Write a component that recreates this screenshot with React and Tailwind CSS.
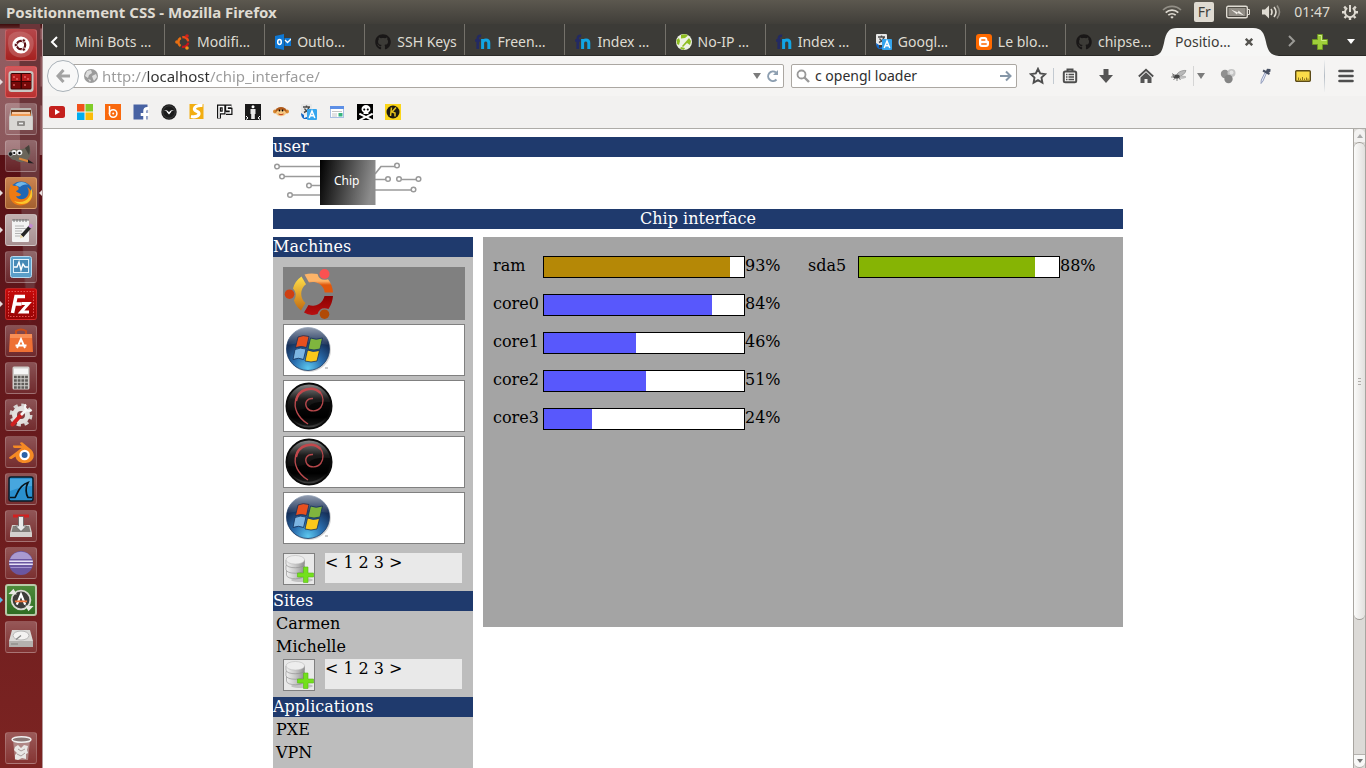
import React from "react";
import { FaGithub, FaSkullCrossbones, FaFacebookF } from "react-icons/fa";
import { SiBlender } from "react-icons/si";

/* ---------- shared drawings ---------- */

function TranslateIcon() {
  return (
    <svg viewBox="0 0 16 16" className="size-4 shrink-0" aria-hidden="true">
      <rect x="0" y="0" width="11" height="11" rx="1" fill="#e8e8e8" />
      <path d="M2 3h7M5.500 1.500V3M3 8.500c3-1.500 4.500-3 5-5.500M3.500 4.500c1 2 2.500 3 4 4" stroke="#4a4a4a" strokeWidth="1.400" fill="none" />
      <path d="M0 9l3 2v3l3-1 1 2H3C1 14 0 12 0 9z" fill="#1468c7" />
      <rect x="6" y="5" width="10" height="11" rx="1" fill="#35a5ee" />
      <path d="M8.200 14L11 7l2.800 7M9.200 11.700h3.600" stroke="#fff" strokeWidth="1.500" fill="none" />
    </svg>
  );
}

function UbuntuRing() {
  return (
    <svg viewBox="0 0 16 16" className="size-4 shrink-0" fill="none" strokeWidth="2.400" aria-hidden="true">
      <path d="M5.800 3.900A4.700 4.700 0 0 0 5.600 12" stroke="#e96f12" />
      <path d="M7.300 3.300A4.700 4.700 0 0 1 13.200 7.300" stroke="#ee4a16" />
      <path d="M13.200 8.700A4.700 4.700 0 0 1 7.100 12.600" stroke="#c8141c" />
      <circle cx="1.900" cy="8" r="1.800" fill="#e96f12" stroke="none" />
      <circle cx="12" cy="2" r="1.800" fill="#d3201c" stroke="none" />
      <circle cx="12" cy="14" r="1.800" fill="#f09018" stroke="none" />
    </svg>
  );
}

function OutlookIcon() {
  return (
    <svg viewBox="0 0 16 16" className="size-4 shrink-0" aria-hidden="true">
      <path d="M0 2l9-2v16l-9-2z" fill="#0f78d4" />
      <path d="M9.500 4H16v8H9.500z" fill="#0f78d4" />
      <path d="M10 6l2.500 2.500L16 5" stroke="#fff" strokeWidth="1.300" fill="none" />
      <ellipse cx="4.500" cy="8" rx="1.800" ry="2.400" fill="none" stroke="#fff" strokeWidth="1.500" />
    </svg>
  );
}

function FnIcon() {
  return (
    <svg viewBox="0 0 16 16" className="size-4 shrink-0" aria-hidden="true">
      <path d="M2.700 15V5c0-2.500 1-3.500 3.500-3.200M0 6.500h5.500" stroke="#232a63" strokeWidth="2.600" fill="none" />
      <path d="M7.600 15V5M7.600 8.500C8.500 5.300 13.800 5 13.800 9v6" stroke="#12a5e4" strokeWidth="3" fill="none" />
    </svg>
  );
}

function NoIpIcon() {
  return (
    <svg viewBox="0 0 16 16" className="size-4 shrink-0" aria-hidden="true">
      <circle cx="8" cy="8" r="8" fill="#eef2e4" />
      <path d="M5 1q4-1.500 7 .5L9 4 5 4.500zM.5 6l2.500-2 1 3-1 4-2-1zM6 12l7-8 2 3-1 4-3-2-4 4zM5 13l4 1-1 2-4-1.500z" fill="#8fbe22" />
    </svg>
  );
}

function BloggerIcon() {
  return (
    <svg viewBox="0 0 16 16" className="size-4 shrink-0" aria-hidden="true">
      <rect width="16" height="16" rx="3" fill="#ff6a00" />
      <path d="M5.500 3h3.200C10.500 3 11.300 4 11.300 5.500c0 1 .4 1.300 1.200 1.500.5.200.5.500.5 1V10c0 2-1.200 3-3 3H6c-2 0-3-1.200-3-3V6c0-2 1-3 2.500-3z" fill="#fff" />
      <path d="M5.800 6h3M5.800 10h4.400" stroke="#ff6a00" strokeWidth="1.500" strokeLinecap="round" />
    </svg>
  );
}

const TABS = [
  { label: "Mini Bots …" },
  { label: "Modifi…", icon: <UbuntuRing /> },
  { label: "Outlo…", icon: <OutlookIcon /> },
  { label: "SSH Keys", icon: <FaGithub className="size-4 shrink-0 text-[#191717]" /> },
  { label: "Freen…", icon: <FnIcon /> },
  { label: "Index …", icon: <FnIcon /> },
  { label: "No-IP …", icon: <NoIpIcon /> },
  { label: "Index …", icon: <FnIcon /> },
  { label: "Googl…", icon: <TranslateIcon /> },
  { label: "Le blo…", icon: <BloggerIcon /> },
  { label: "chipse…", icon: <FaGithub className="size-4 shrink-0 text-[#191717]" /> },
];

/* ---------- title bar ---------- */

function TitleBar() {
  return (
    <header className="flex h-6 shrink-0 items-center bg-linear-to-b from-[#5c584f] to-[#403e39] pr-2 pl-1.5 text-[#dfdbd2]">
      <h1 className="text-[15px] leading-6 font-bold">Positionnement CSS - Mozilla Firefox</h1>
      <div className="ml-auto flex items-center gap-3">
        <svg viewBox="0 0 20 14" className="h-3.5 w-5" aria-label="Wi-Fi" fill="none" stroke="#dfdbd2" strokeWidth="1.700">
          <path d="M1 5a13 13 0 0 1 18 0" opacity=".45" />
          <path d="M3.700 7.600a9.500 9.500 0 0 1 12.600 0" />
          <path d="M6.300 10.200a5.500 5.500 0 0 1 7.400 0" />
          <path d="M8.300 12l1.700 1.800 1.700-1.800a2.500 2.500 0 0 0-3.400 0z" fill="#dfdbd2" stroke="none" />
        </svg>
        <span className="flex h-5 w-5 items-center justify-center rounded-xs bg-[#dfdbd2] text-sm text-[#3f3e3a]">Fr</span>
        <svg viewBox="0 0 24 14" className="h-3.5 w-6" aria-label="Battery">
          <rect x=".7" y="1.200" width="20.600" height="11.600" rx="1.500" fill="none" stroke="#dfdbd2" strokeWidth="1.400" />
          <rect x="2.500" y="3" width="17" height="8" fill="#918d85" />
          <path d="M22 4.500h1.500v5H22" fill="none" stroke="#dfdbd2" />
          <path d="M5 4.500l7 3 .5-2 5.500 5-6.500-2.500-.5 1.500z" fill="#f1eee8" />
        </svg>
        <svg viewBox="0 0 20 16" className="h-4 w-5" aria-label="Sound" fill="none" stroke="#dfdbd2" strokeWidth="1.600">
          <path d="M0 5.500h3l4-4v13l-4-4H0z" fill="#dfdbd2" stroke="none" />
          <path d="M9 5q2 3 0 6M12 3q4 5 0 10" />
          <path d="M15 1.500q5 6.500 0 13" opacity=".45" />
        </svg>
        <time className="text-sm">01:47</time>
        <svg viewBox="0 0 16 16" className="size-4" aria-label="Session" fill="none" stroke="#dfdbd2">
          <path d="M5.200 4A5 5 0 1 0 10.800 4" strokeWidth="2" />
          <path d="M8 1v7" strokeWidth="2" />
          <path d="M3.800 4.300L2.200 2.700M12.200 4.300l1.600-1.600M3 8.300H0M16 8.300h-3M4.200 12.200L2.500 14M11.800 12.200l1.700 1.800M8 13v3" strokeWidth="2.400" />
        </svg>
      </div>
    </header>
  );
}

/* ---------- launcher ---------- */

const GLASS = "border-[#ffffff2e] bg-linear-to-b from-[#ffffff40] to-[#ffffff14]";

const APPS = [
  {
    name: "Dash",
    tile: "border-[#ffffff2e] bg-linear-to-b from-[#b5464a] to-[#a5201f]",
    art: (
      <>
        <path d="M3 6C8 0 20 0 26 7c3 5 2 13-3 18C15 30 6 27 3 20q-2-8 0-14z" fill="#d28a8a" opacity=".4" />
        <circle cx="15" cy="15" r="8.600" fill="#fff" />
        <circle cx="15" cy="15" r="4.200" fill="none" stroke="#5d1117" strokeWidth="2.200" />
        <circle cx="9.800" cy="15" r="1.700" fill="#5d1117" stroke="#fff" strokeWidth=".8" />
        <circle cx="17.800" cy="10.500" r="1.700" fill="#5d1117" stroke="#fff" strokeWidth=".8" />
        <circle cx="17.800" cy="19.500" r="1.700" fill="#5d1117" stroke="#fff" strokeWidth=".8" />
      </>
    ),
  },
  {
    name: "Terminal",
    running: true,
    tile: "border-[#ff8a8a60] bg-linear-to-b from-[#d2585c] to-[#b8302f]",
    art: (
      <>
        <rect x="2.500" y="4" width="25" height="21" rx="3" fill="#c9c5c0" />
        <rect x="4.500" y="6" width="21" height="16.500" rx="1.500" fill="#3a0303" />
        <path d="M5.500 7h9v7h-9zM16 7h9v7h-9z" fill="#b51a1a" />
        <path d="M5.500 15h9v6.500h-9zM16 15h9v6.500h-9z" fill="#760808" />
        <path d="M7 10h2M10 12h2M18 10h2M21 12h2M7 18h2M18 18h2" stroke="#ff8080" />
      </>
    ),
  },
  {
    name: "Files",
    tile: GLASS,
    art: (
      <>
        <path d="M5 4h20l2 9v13H3V13z" fill="#b9b6b2" />
        <rect x="5" y="6" width="20" height="7" fill="#6b3b1d" />
        <path d="M6 8h18l1 4H5z" fill="#ef9a52" />
        <path d="M6 9h18" stroke="#fff" strokeWidth="1.200" />
        <rect x="3.500" y="12" width="23" height="14" rx="1" fill="#d9d7d4" />
        <rect x="11" y="17" width="8" height="5" rx="1" fill="#8e8b88" />
        <path d="M13 19.500h4" stroke="#eee" strokeWidth="1.500" />
      </>
    ),
  },
  {
    name: "GIMP",
    tile: GLASS,
    art: (
      <>
        <path d="M3 13c1-5 4-5 6-5 5 1 9 1 14-4 2 6 2 11-1 14-4 4-9 4-13 1-3 0-6-2-6-6z" fill="#6a655a" />
        <path d="M19 7l4-3c1 4 1 7 0 10z" fill="#45413a" />
        <circle cx="8" cy="11.500" r="2.600" fill="#eee" />
        <circle cx="13.500" cy="11.500" r="2.800" fill="#eee" />
        <circle cx="8.200" cy="12" r="1.100" />
        <circle cx="13.500" cy="12" r="1.200" />
        <circle cx="4.500" cy="13" r="2.300" fill="#1b1b1b" stroke="#aaa" strokeWidth=".8" />
        <path d="M13 17.500l10 3" stroke="#d8883c" strokeWidth="2.200" />
        <path d="M22 18.500l6 4-6-.5z" fill="#222" />
      </>
    ),
  },
  {
    name: "Firefox",
    running: true,
    focused: true,
    tile: "border-[#ffd3a060] bg-linear-to-b from-[#c98350] to-[#a4602f]",
    art: (
      <>
        <circle cx="15" cy="15" r="11.500" fill="#2167b5" />
        <path d="M9 7c3-4 10-4 13 0-3-1-6 0-8 2z" fill="#71b7e8" />
        <path d="M5 6c2 2 4 2 6 2 2 1 2 3 1 4l-2 1c1 2 5 2 5 4-2 2-4 1-5 1 2 5 10 4 12-1 1-3 1-5-1-8 6 3 7 12 1 16-6 4-14 3-17-3-3-5-2-11 0-16z" fill="#ee7a12" />
        <path d="M25 10c3 6 1 12-4 15-5 2-10 1-13-2 6 2 12 1 15-4 2-3 2-6 2-9z" fill="#fbc72b" />
      </>
    ),
  },
  {
    name: "Text Editor",
    running: true,
    tile: "border-[#ffffff50] bg-linear-to-b from-[#c2b0b0] to-[#a78f90]",
    art: (
      <>
        <rect x="6" y="5" width="17" height="22" rx="1" fill="#f3f3f3" />
        <path d="M6 5h17M8 4v3M11 4v3M14 4v3M17 4v3M20 4v3" stroke="#777" />
        <path d="M9 11h9M9 13.500h11M9 16h7M9 18.500h9M9 21h6" stroke="#b4b4b4" />
        <path d="M16 21l8-9" stroke="#252525" strokeWidth="3.400" />
        <path d="M23.500 12.500l2.500-3" stroke="#c28ad0" strokeWidth="3.400" />
        <path d="M14 23.500l.7-3.800 2.700 2.200z" fill="#ead8a4" />
      </>
    ),
  },
  {
    name: "System Monitor",
    tile: GLASS,
    art: (
      <>
        <rect x="4.500" y="4.500" width="21" height="21" rx="2" fill="#5b9fc9" stroke="#b5d9ee" />
        <rect x="7.500" y="7.500" width="15" height="13" fill="#468ab6" stroke="#dff0fa" />
        <path d="M8 15h3l2-5 2 8 2-6 2 3h3" fill="none" stroke="#fff" strokeWidth="1.400" />
      </>
    ),
  },
  {
    name: "FileZilla",
    running: true,
    tile: "border-[#ff6b6b50] bg-linear-to-b from-[#c80b0b] to-[#970505]",
    art: (
      <>
        <rect x="2.500" y="2.500" width="25" height="25" fill="none" stroke="#e45555" strokeDasharray="1.500 1.500" />
        <path d="M6.500 24L10 7.500h9M8.500 15h7" fill="none" stroke="#fff" strokeWidth="3.600" />
        <path d="M15.500 14.500h7L15 23h8" fill="none" stroke="#fff" strokeWidth="3" />
      </>
    ),
  },
  {
    name: "Software Center",
    tile: GLASS,
    art: (
      <>
        <path d="M10 9V5q5-3 10 0v4" fill="none" stroke="#c94c17" strokeWidth="2" />
        <path d="M4 8h22l1 18H3z" fill="#ee7034" />
        <path d="M4 8h22v4H4z" fill="#f78e55" />
        <path d="M11 22l4-9 4 9M9.500 19.500h11" fill="none" stroke="#fff" strokeWidth="1.900" />
      </>
    ),
  },
  {
    name: "Calculator",
    tile: GLASS,
    art: (
      <>
        <rect x="6.500" y="3.500" width="17" height="23" rx="1.500" fill="#cfcdca" />
        <rect x="8" y="5.500" width="14" height="5.500" fill="#f6f6f6" />
        <path d="M8 14h14M8 17.500h14M8 21h14M8 24.500h14" stroke="#5f5c59" strokeWidth="2.600" strokeDasharray="2.800 .9" />
      </>
    ),
  },
  {
    name: "System Settings",
    tile: GLASS,
    art: (
      <>
        <circle cx="15" cy="15" r="9.500" fill="none" stroke="#d6d3d1" strokeWidth="4" strokeDasharray="4 3.460" />
        <circle cx="15" cy="15" r="6.500" fill="none" stroke="#e3e0de" strokeWidth="5" />
        <path d="M6.500 24.500L15 15" stroke="#cf2020" strokeWidth="4" strokeLinecap="round" />
        <path d="M15 15l5-5" stroke="#f6f6f6" strokeWidth="2.600" />
        <path d="M20 4.500a3.600 3.600 0 1 0 5.500 5" fill="none" stroke="#f6f6f6" strokeWidth="2.200" />
      </>
    ),
  },
  {
    name: "Blender",
    tile: GLASS,
    art: (
      <>
        <path d="M3 20.500L15.500 11H8.500q-2-.5-1.500-2.500h9L14 6.500q.5-2 2.500-1L25.500 13q3 3.500 2 7.500c-2 5-7 6-11 5.500-4-.8-6.500-3.500-7-6.500L5.500 22q-2.500 0-2.500-1.500z" fill="#f58a24" />
        <circle cx="18.600" cy="18" r="5.200" fill="#fff" />
        <circle cx="18.600" cy="18" r="3" fill="#2a62a8" />
      </>
    ),
  },
  {
    name: "Wireshark",
    tile: GLASS,
    art: (
      <>
        <rect x="3" y="3" width="24" height="24" rx="2" fill="#2a90cf" stroke="#0a1a26" strokeWidth="1.500" />
        <path d="M4 5h22v7c-8 0-14 2-22 5z" fill="#5bb6e8" opacity=".6" />
        <path d="M4 23.500h5c2-2 3-12 13-15-3 5-2 12 0 15h4" fill="none" stroke="#07131c" strokeWidth="1.700" />
      </>
    ),
  },
  {
    name: "Installer",
    tile: GLASS,
    art: (
      <>
        <path d="M6 14h18l2 8v4H4v-4z" fill="#d3d0cd" />
        <path d="M7 15h16l1.500 6h-19z" fill="#817d79" />
        <path d="M7 5h16" stroke="#d22020" strokeWidth="3" />
        <path d="M12.500 5.500h5V15h3L15 20.500 9.500 15h3z" fill="#e9e9e9" stroke="#555" strokeWidth=".7" />
      </>
    ),
  },
  {
    name: "Eclipse",
    tile: GLASS,
    art: (
      <>
        <circle cx="15" cy="15" r="12" fill="#6a56a0" />
        <path d="M4 11a12 12 0 0 1 22 0z" fill="#a99ad0" />
        <path d="M3.200 13.300h23.600M3.200 16.300h23.600" stroke="#e7e1f5" strokeWidth="1.600" />
        <path d="M4.500 19.500h21" stroke="#a392cf" strokeWidth="1.200" />
      </>
    ),
  },
  {
    name: "Software Updater",
    urgent: true,
    tile: "border-2 border-[#b8c9a8] bg-linear-to-b from-[#4d8a3a] to-[#2f6d23]",
    art: (
      <>
        <circle cx="15" cy="15" r="10" fill="#3d3d3a" stroke="#d9d9d2" strokeWidth="2" />
        <path d="M1.500 8.500L7 3l3.500 6zM28.500 21.500L23 27l-3.500-6z" fill="#e9e9e4" />
        <path d="M10.500 20l4.500-11 4.500 11" fill="none" stroke="#fff" strokeWidth="2.400" />
        <path d="M8.500 16.500h13" stroke="#f0763c" strokeWidth="2" />
      </>
    ),
  },
  {
    name: "Disk",
    tile: GLASS,
    art: (
      <>
        <path d="M6 8h18l3 11v6H3v-6z" fill="#dbd9d7" />
        <path d="M3 19h24v6H3z" fill="#b4b1ae" />
        <ellipse cx="15" cy="13.500" rx="8" ry="4.500" fill="#f3f2f1" stroke="#aaa" strokeWidth=".8" />
        <path d="M15 13.500l-5 4" stroke="#888" strokeWidth="1.300" />
        <path d="M5 22h7" stroke="#83807d" />
      </>
    ),
  },
];

const TRASH = {
  name: "Trash",
  tile: GLASS,
  art: (
    <>
      <path d="M7 7h17l-2 20H9z" fill="#c9b9b8" opacity=".55" />
      <ellipse cx="15.500" cy="6.500" rx="9.500" ry="2.800" fill="#8b7876" stroke="#efefef" strokeWidth="1.400" />
      <path d="M9 14l3-2 3 3 3-3 4 1-1 4 1 3-2 1v5l-4-1-4 2-3-1v-4l2-2-3-3z" fill="#e9e7e5" />
      <path d="M12 16l3 2 4-2M11 21l4 2 4-3" stroke="#a99c9b" fill="none" />
    </>
  ),
};

function LauncherItem({ app }) {
  return (
    <li className="flex w-full items-center">
      <svg viewBox="0 0 3 6" className="mr-0.5 h-1.5 w-[3px] shrink-0" aria-hidden="true">
        {app.running && <path d="M0 0l3 3-3 3z" fill="#e8dede" />}
        {app.urgent && <path d="M0 0l3 3-3 3z" fill="#5db9e8" />}
      </svg>
      <button aria-label={app.name} className={`size-8 shrink-0 overflow-hidden rounded-[3px] border ${app.tile}`}>
        <svg viewBox="0 0 30 30" className="size-full" aria-hidden="true">
          {app.art}
        </svg>
      </button>
      {app.focused && (
        <svg viewBox="0 0 3 6" className="ml-auto h-1.5 w-[3px]" aria-hidden="true">
          <path d="M3 0L0 3l3 3z" fill="#e8dede" />
        </svg>
      )}
    </li>
  );
}

function Launcher() {
  return (
    <nav
      aria-label="Launcher"
      className="flex w-[43px] shrink-0 flex-col border-r border-[#b59a9b] bg-[radial-gradient(circle_at_42px_24px,#6b3539_8px,transparent_9px),radial-gradient(circle_at_42px_72px,#6b3539_9px,transparent_10px),radial-gradient(ellipse_at_30px_44px,#6b3539_10px,transparent_11px),linear-gradient(to_bottom,#3d0c0c_0px,#5d2425_4px,#925d61_5px,#8c595d_131px,#54101500_131px),linear-gradient(to_bottom,#54080c,#5c151a_30%,#7c2422)] pt-[5px] pb-1"
    >
      <ul className="flex flex-col gap-[5px]">
        {APPS.map((app) => (
          <LauncherItem key={app.name} app={app} />
        ))}
      </ul>
      <ul className="mt-auto">
        <LauncherItem app={TRASH} />
      </ul>
    </nav>
  );
}

/* ---------- tab strip ---------- */

function TabStrip() {
  return (
    <div className="flex h-8 shrink-0 items-stretch border-b border-[#2b2a27] bg-[#3c3b37]" role="tablist">
      <button aria-label="Scroll tabs left" className="flex w-[21px] shrink-0 items-center justify-center pt-1">
        <svg viewBox="0 0 8 12" className="h-3 w-2" fill="none" stroke="#fff" strokeWidth="2">
          <path d="M7 1L2 6l5 5" />
        </svg>
      </button>
      {TABS.map((tab, i) => (
        <button
          key={i}
          role="tab"
          aria-selected="false"
          className="flex min-w-0 flex-1 items-center gap-1.5 overflow-hidden border-l border-[#74716a] pt-1 pl-2.5 text-sm whitespace-nowrap text-[#dfdbd2]"
        >
          {tab.icon}
          <span>{tab.label}</span>
        </button>
      ))}
      <div role="tab" aria-selected="true" className="relative -mb-px -ml-3 flex w-[126px] shrink-0 items-center pt-1 pl-[22px] text-sm whitespace-nowrap text-[#3c3b37]">
        <svg viewBox="0 0 126 32" preserveAspectRatio="none" className="absolute inset-0 size-full" aria-hidden="true">
          <path d="M0 32C8 31 9 27 11 19 13 8 16 4 24 4H100c9 0 11 5 13 14 2 9 4 13 13 14z" fill="#f6f6f5" />
        </svg>
        <span className="relative">Positio…</span>
        <button aria-label="Close tab" className="relative ml-3.5">
          <svg viewBox="0 0 8 8" className="size-2" stroke="#555450" strokeWidth="2.400">
            <path d="M.8.8l6.400 6.400M7.200.8L.8 7.200" />
          </svg>
        </button>
      </div>
      <button aria-label="Scroll tabs right" className="flex w-[25px] shrink-0 items-center justify-center pt-0.5">
        <svg viewBox="0 0 8 12" className="h-3 w-2" fill="none" stroke="#9b9a96" strokeWidth="2">
          <path d="M1 1l5 5-5 5" />
        </svg>
      </button>
      <button aria-label="New tab" className="flex w-8 shrink-0 items-center justify-center pt-1">
        <svg viewBox="0 0 16 16" className="size-4">
          <path d="M5.500.5h5v5h5v5h-5v5h-5v-5h-5v-5h5z" fill="#9fce3a" stroke="#6f9722" />
          <path d="M6.500 1.500h3v5h5" stroke="#cfeb86" fill="none" />
        </svg>
      </button>
      <button aria-label="List all tabs" className="flex w-[30px] shrink-0 items-center justify-center pt-1">
        <svg viewBox="0 0 8 5" className="h-[5px] w-2">
          <path d="M0 0h8L4 5z" fill="#fff" />
        </svg>
      </button>
    </div>
  );
}

/* ---------- navigation toolbar ---------- */

function ToolButton({ label, width, children }) {
  return (
    <button aria-label={label} className={`flex h-8 shrink-0 items-center justify-center ${width}`}>
      {children}
    </button>
  );
}

function NavBar() {
  return (
    <div className="flex h-10 shrink-0 items-center bg-[#f5f4f3]">
      <button
        aria-label="Back"
        className="z-10 ml-1 flex size-8 shrink-0 items-center justify-center rounded-full border border-[#a9b1b8] bg-[#f8f8f8]"
      >
        <svg viewBox="0 0 14 14" className="size-3.5" fill="none" stroke="#a3a3a3" strokeWidth="3">
          <path d="M7.500 1L2 7l5.500 6M2.500 7H14" />
        </svg>
      </button>
      <div className="-ml-4 flex h-6 min-w-0 flex-1 items-center rounded-xs border border-[#aba7a2] bg-white pr-1 pl-5">
        <svg viewBox="0 0 14 14" className="size-3.5 shrink-0" aria-hidden="true">
          <circle cx="7" cy="7" r="7" fill="#9b9b9b" />
          <path d="M3 2l4-1 1 3-3 2-1 3-3-2zM8 7l4-2 1 3-3 4-1-2zM4 10l3 1-1 2z" fill="#dedede" />
        </svg>
        <input
          aria-label="Address"
          type="text"
          defaultValue="http://localhost/chip_interface/"
          className="ml-1 min-w-0 flex-1 bg-[linear-gradient(to_right,#9a9a9a_44px,#2e2e2e_44px,#2e2e2e_107px,#9a9a9a_107px)] bg-clip-text text-[15px] text-transparent outline-none"
        />
        <svg viewBox="0 0 8 6" className="h-1.5 w-2" aria-hidden="true">
          <path d="M0 0h8L4 6z" fill="#7b7b7b" />
        </svg>
        <button aria-label="Reload" className="ml-1.5">
          <svg viewBox="0 0 12 12" className="size-3" fill="none" stroke="#8d9fb1" strokeWidth="2">
            <path d="M9.500 9.500A4.800 4.800 0 1 1 9 2.500" />
            <path d="M11 0v5H6z" fill="#8d9fb1" stroke="none" />
          </svg>
        </button>
      </div>
      <div className="ml-[7px] flex h-6 w-[226px] shrink-0 items-center rounded-xs border border-[#aba7a2] bg-white px-1">
        <svg viewBox="0 0 14 14" className="size-3.5 shrink-0" fill="none" stroke="#999" aria-hidden="true">
          <circle cx="5.500" cy="5.500" r="4" strokeWidth="1.800" />
          <path d="M8.500 8.500L13 13" strokeWidth="2.400" />
        </svg>
        <input
          aria-label="Search"
          type="text"
          defaultValue="c opengl loader"
          className="ml-[5px] min-w-0 flex-1 text-sm text-[#2e2e2e] outline-none"
        />
        <button aria-label="Go">
          <svg viewBox="0 0 12 12" className="size-3" fill="none" stroke="#8697a8" strokeWidth="2">
            <path d="M0 6h10M6 1.500L10.500 6 6 10.500" />
          </svg>
        </button>
      </div>
      <ToolButton label="Bookmark this page" width="ml-[5px] w-[31px]">
        <svg viewBox="0 0 18 18" className="size-[18px]">
          <path d="M9 1.800l2.200 4.600 5 .7-3.700 3.500.9 5L9 13.200l-4.400 2.400.9-5L1.800 7.100l5-.7z" fill="none" stroke="#4e4e4e" strokeWidth="1.900" />
        </svg>
      </ToolButton>
      <span className="h-4 w-px shrink-0 bg-[#c3cad1]" />
      <ToolButton label="Bookmarks" width="w-[31px]">
        <svg viewBox="0 0 16 16" className="size-4" fill="none" stroke="#4e4e4e">
          <rect x="1.800" y="3.500" width="12.400" height="10.700" rx="1.500" strokeWidth="2" />
          <path d="M5.500 3V1.500h5V3" strokeWidth="2" />
          <path d="M4 6.500h1.500M6.500 6.500H12M4 9h1.500M6.500 9H12M4 11.500h1.500M6.500 11.500H12" strokeWidth="1.400" />
        </svg>
      </ToolButton>
      <ToolButton label="Downloads" width="w-[42px]">
        <svg viewBox="0 0 14 14" className="size-3.5">
          <path d="M4.500 0h5v6H14l-7 8-7-8h4.500z" fill="#555" />
        </svg>
      </ToolButton>
      <ToolButton label="Home" width="w-[38px]">
        <svg viewBox="0 0 16 16" className="size-4" fill="none" stroke="#4e4e4e">
          <path d="M.8 8.500L8 1.800l7.200 6.700" strokeWidth="1.800" />
          <path d="M2.500 9.500L8 4.300l5.500 5.200V15h-4v-4h-3v4h-4z" fill="#555" stroke="none" />
        </svg>
      </ToolButton>
      <ToolButton label="Firebug" width="w-7">
        <svg viewBox="0 0 16 16" className="size-4">
          <path d="M6 6c2-3 7-4 9-3.500C14 6 11 8 7 8.500z" fill="#b9b9b9" stroke="#888" strokeWidth=".7" />
          <path d="M8 9c3-1 6-1 7 0-2 1.500-5 1.500-7 1z" fill="#c9c9c9" stroke="#999" strokeWidth=".6" />
          <ellipse cx="5.500" cy="8.500" rx="3.200" ry="2" fill="#454545" />
          <circle cx="2.700" cy="7.500" r="1.300" fill="#888" />
          <path d="M1 5.500l2 1.500M0 9h3M2.500 12l2-2.500M6 13v-3M9.500 12L8 10" stroke="#555" strokeWidth=".7" />
        </svg>
      </ToolButton>
      <span className="h-5 w-px shrink-0 bg-[#d5d5d5]" />
      <ToolButton label="Firebug menu" width="w-[13px]">
        <svg viewBox="0 0 8 6" className="h-1.5 w-2">
          <path d="M0 0h8L4 6z" fill="#7b7b7b" />
        </svg>
      </ToolButton>
      <ToolButton label="Colors" width="w-[42px]">
        <svg viewBox="0 0 16 16" className="size-4">
          <circle cx="5" cy="6" r="4.200" fill="#909090" />
          <circle cx="11.500" cy="5" r="4" fill="#c4c4c4" />
          <circle cx="8.500" cy="11" r="4.200" fill="#848484" />
          <circle cx="11.500" cy="4.500" r="2" fill="#e4e4e4" />
        </svg>
      </ToolButton>
      <ToolButton label="Color picker" width="w-8">
        <svg viewBox="0 0 16 16" className="size-4">
          <path d="M9.500 5L6 13l-2 2.500L4.300 12 8 4.500z" fill="#e8ecf8" stroke="#8b96b8" strokeWidth=".9" />
          <path d="M6 2.500l6.500 3.500" stroke="#4a5264" strokeWidth="2.200" />
          <path d="M8.500 4L10 .8l3.500.2v2.500L11 5z" fill="#4a5264" />
        </svg>
      </ToolButton>
      <ToolButton label="Ruler" width="w-[43px]">
        <svg viewBox="0 0 16 12" className="h-3 w-4">
          <rect x=".7" y=".7" width="14.600" height="10.600" rx="1" fill="#fbdc49" stroke="#5b4a17" strokeWidth="1.400" />
          <path d="M3.500 10V7.500M5.500 10V8.500M7.500 10V7M9.500 10V8.500M11.500 10V7.500M13 10V8.500" stroke="#8e7520" />
        </svg>
      </ToolButton>
      <span className="h-8 w-px shrink-0 bg-linear-to-b from-[#f1f1f1] via-[#b4bcc4] to-[#f1f1f1]" />
      <ToolButton label="Menu" width="w-[41px]">
        <svg viewBox="0 0 16 14" className="h-3.5 w-4" stroke="#4e4e4e" strokeWidth="2.600" strokeLinecap="round">
          <path d="M1.500 2h13M1.500 7h13M1.500 12h13" />
        </svg>
      </ToolButton>
    </div>
  );
}

/* ---------- bookmarks ---------- */

const BOOKMARKS = [
  ["YouTube", <><rect y="2" width="16" height="12" rx="2.500" fill="#c4201d" /><path d="M6 5l5 3-5 3z" fill="#fff" /></>],
  ["Microsoft", <><path d="M0 0h7.500v7.500H0z" fill="#f1511b" /><path d="M8.500 0H16v7.500H8.500z" fill="#80cc28" /><path d="M0 8.500h7.500V16H0z" fill="#00adef" /><path d="M8.500 8.500H16V16H8.500z" fill="#fbbc09" /></>],
  ["Bitbucket", <><rect width="16" height="16" fill="#f9690e" /><path d="M4.500 2v8" stroke="#fff" strokeWidth="1.500" /><circle cx="8.200" cy="9.500" r="3.700" fill="none" stroke="#fff" strokeWidth="1.500" /><circle cx="8.200" cy="9.500" r="1" fill="#fff" /></>],
  ["Facebook", <><rect x=".5" y=".5" width="14" height="15" fill="#4862a3" /><FaFacebookF x="4" y="3" width="10" height="12.500" color="#fff" /></>],
  ["Wings", <><circle cx="8" cy="8" r="7.700" fill="#1b1b1b" /><circle cx="8" cy="8" r="6.200" fill="none" stroke="#555" strokeWidth=".6" /><path d="M3 6c2-.3 3.500.3 5 2.200C9.500 6.300 11 5.700 13 6c-2 .5-2.500 1-3.200 2.500L8 10.500 6.200 8.500C5.500 7 5 6.500 3 6z" fill="#fff" /></>],
  ["Site S", <><rect x=".5" width="14" height="15" fill="#f2ae12" /><path d="M13.500 1.500C8 1 5 3 5.500 5.500c.5 2 4.500 1.500 4.500 4C10 12 6.500 13.500 2 12.500" fill="none" stroke="#fff" strokeWidth="3.200" /></>],
  ["ps", <><path d="M2 14.500V2.500h4.500v6H3M14.500 2.500H10v3.300h3.500v3.200H9" fill="none" stroke="#111" strokeWidth="4" /><path d="M2 14V2.500h4.500v6H3M14.500 2.500H10v3.300h3.500v3.200H9" fill="none" stroke="#fff" strokeWidth="1.600" /></>],
  ["Figure", <><rect width="16" height="16" fill="#1a1a1a" /><circle cx="8" cy="2.800" r="1.500" fill="#fff" /><path d="M5.500 5h5v5H9.800v5H6.200v-5H5.500z" fill="#e8e8e8" /><path d="M1 12l2 2-2 1.500M15 12l-2 2 2 1.500" stroke="#fff" fill="none" /></>],
  ["Monkey", <><circle cx="2" cy="7.500" r="2" fill="#d9892f" /><circle cx="14" cy="7.500" r="2" fill="#d9892f" /><ellipse cx="8" cy="7" rx="5.500" ry="4" fill="#b05a1a" /><ellipse cx="8" cy="9" rx="5" ry="3.200" fill="#f7ca83" /><path d="M5.500 10q2.500 1.500 5 0" stroke="#c23a1c" fill="none" /><circle cx="6.500" cy="6.500" r=".9" /><circle cx="9.500" cy="6.500" r=".9" /></>],
  ["Translate", null],
  ["Window", <><rect x="1.500" y="2.500" width="13" height="11" fill="#fff" stroke="#a9bfe4" /><path d="M1 3.500h14" stroke="#5d8fe6" strokeWidth="3" /><path d="M3 7.500h10M3 10h5M3 12h5" stroke="#c4c4c4" /><path d="M9.500 9h4v3.500h-4z" fill="#36b37e" /></>],
  ["Skull", <><rect width="16" height="16" fill="#000" /><FaSkullCrossbones x="1" y="1" width="14" height="14" color="#fff" /></>],
  ["Badge", <><rect width="16" height="16" fill="#fbd61b" /><circle cx="8" cy="8" r="6.500" fill="#1c1a12" /><path d="M6.500 3.500L5.500 12M11 3.500L7 8l3 1v3.500" stroke="#e5c21c" strokeWidth="1.500" fill="none" /></>],
];

function BookmarksBar() {
  return (
    <div className="flex h-[33px] shrink-0 items-center gap-3 border-b border-[#aeaca8] bg-[#f2f1f0] pl-1.5">
      {BOOKMARKS.map(([name, art]) => (
        <a key={name} href="#" aria-label={name} className="size-4 shrink-0">
          {art ? (
            <svg viewBox="0 0 16 16" className="size-4" aria-hidden="true">
              {art}
            </svg>
          ) : (
            <TranslateIcon />
          )}
        </a>
      ))}
    </div>
  );
}

/* ---------- page ---------- */

function ChipLogo() {
  return (
    <svg viewBox="0 0 150 52" className="h-[52px] w-[150px]" role="img" aria-label="Chip">
      <defs>
        <linearGradient id="chip" x1="0" x2="1" y1="0" y2=".15">
          <stop offset="0" stopColor="#000" />
          <stop offset="1" stopColor="#8c8c8c" />
        </linearGradient>
      </defs>
      <g fill="none" stroke="#9a9a9a" strokeWidth="1.700">
        <path d="M6 9.500h41M11 19.500h36M38 28.500h9M19 38h28M102 17l6-7.500h14M102 22.500h11M102 33h36M129 22.500h16" />
        <g fill="#fff" strokeWidth="1.500">
          <circle cx="4" cy="9.500" r="2.300" />
          <circle cx="9" cy="19.500" r="2.300" />
          <circle cx="36" cy="28.500" r="2.300" />
          <circle cx="17" cy="38" r="2.300" />
          <circle cx="124" cy="8.500" r="2.300" />
          <circle cx="115" cy="22" r="2.300" />
          <circle cx="126" cy="22" r="2.300" />
          <circle cx="145.500" cy="22" r="2.300" />
          <circle cx="140.500" cy="32.500" r="2.300" />
        </g>
      </g>
      <rect x="47" y="3" width="55.500" height="45" fill="url(#chip)" />
      <text x="61" y="28" fontSize="12" fill="#fff" fontFamily="Noto Sans, sans-serif">Chip</text>
    </svg>
  );
}

function UbuntuLogo() {
  return (
    <svg viewBox="0 0 50 52" className="h-[52px] w-[50px]" aria-hidden="true">
      <defs>
        <linearGradient id="ubA" x1="0" x2="0" y1="0" y2="1">
          <stop offset="0" stopColor="#ffe04a" />
          <stop offset="1" stopColor="#c26a10" />
        </linearGradient>
        <linearGradient id="ubB" x1="0" x2="0" y1="0" y2="1">
          <stop offset=".4" stopColor="#fdb468" />
          <stop offset=".6" stopColor="#e0570c" />
        </linearGradient>
        <linearGradient id="ubC" x1="0" x2="0" y1="0" y2="1">
          <stop offset="0" stopColor="#8c0000" />
          <stop offset="1" stopColor="#b81010" />
        </linearGradient>
      </defs>
      <path d="M18.500 8.600L23 16.200A12 12 0 0 0 22.500 35l-4.500 7.600A21 21 0 0 1 11 32.500q4-7-1-12 2-7.500 8.500-11.900z" fill="url(#ubA)" />
      <path d="M21.500 6.600q6-2 13-.6 2 7.500 10.500 5.200 4.500 5.500 5 13.400h-8.300A12 12 0 0 0 26 14.500z" fill="url(#ubB)" />
      <path d="M41.500 28H50q-.5 7-4.500 13-8.500-2.600-11 5-7.500 2.500-13.500-1.500l4.500-7.600A12 12 0 0 0 41.500 28z" fill="url(#ubC)" />
      <circle cx="41.500" cy="6" r="5" fill="#fb5151" />
      <circle cx="6.500" cy="26.200" r="4.800" fill="#cf3f12" />
      <circle cx="41.500" cy="46.200" r="4.800" fill="#b04a06" />
    </svg>
  );
}

function WindowsLogo() {
  return (
    <svg viewBox="0 0 50 50" className="size-[50px]" aria-hidden="true">
      <defs>
        <radialGradient id="winOrb" cx=".5" cy=".95" r=".85">
          <stop offset="0" stopColor="#5cc8ef" />
          <stop offset=".4" stopColor="#2a6fb0" />
          <stop offset=".85" stopColor="#132a52" />
        </radialGradient>
        <linearGradient id="winGlare" x1="0" x2="0" y1="0" y2="1">
          <stop offset="0" stopColor="#fff" stopOpacity=".6" />
          <stop offset="1" stopColor="#fff" stopOpacity=".05" />
        </linearGradient>
      </defs>
      <circle cx="25" cy="25" r="22" fill="#999" opacity=".4" />
      <circle cx="24" cy="24" r="21.500" fill="url(#winOrb)" stroke="#1c3b66" strokeWidth=".8" />
      <path d="M4 20a20 20 0 0 1 40 0q-20-5-40 0z" fill="url(#winGlare)" />
      <g stroke="#14305a" strokeWidth=".8">
        <path d="M14 12q5-2.500 11-.5L22.500 22.500q-5-2-11 0z" fill="#e8501f" />
        <path d="M26.500 13q5.500 2.500 12 0L36 24q-6 2-12 0z" fill="#7fb53e" />
        <path d="M11 24.500q5-2.500 11-.5L19.500 34.500q-5-2.500-10.500 0z" fill="#7cb5e2" />
        <path d="M23.500 25q5 2.500 12 .5L33 36q-6 2-12 0z" fill="#fbc81b" />
      </g>
      <path d="M41 43h3" stroke="#999" />
    </svg>
  );
}

function DebianLogo() {
  return (
    <svg viewBox="0 0 50 50" className="size-[50px]" aria-hidden="true">
      <defs>
        <linearGradient id="debOrb" x1="0" x2="0" y1="0" y2="1">
          <stop offset="0" stopColor="#8a8a8a" />
          <stop offset=".35" stopColor="#1c1c1c" />
          <stop offset=".75" stopColor="#000" />
          <stop offset="1" stopColor="#4a4a4a" />
        </linearGradient>
      </defs>
      <circle cx="25" cy="25" r="22.500" fill="url(#debOrb)" stroke="#0a0a0a" strokeWidth="2" />
      <path d="M3.500 29q18 1 22-4t21-4a22 22 0 0 1-43 8z" fill="#000" opacity=".6" />
      <path d="M24 43C14 37 9 27 12 18 15 8 29 4 36 11c4 5 3.500 11 1 15-3.500 5-11 5-14 1-3-5 0-10 6-9.500" fill="none" stroke="#b8484c" strokeWidth="1.400" />
      <path d="M12 20C14 8 29 4 36.500 12" fill="none" stroke="#c1484c" strokeWidth="2.400" />
    </svg>
  );
}

function AddDatabaseIcon() {
  return (
    <svg viewBox="0 0 30 30" className="size-[30px]" aria-hidden="true">
      <defs>
        <linearGradient id="disk" x1="0" x2="1">
          <stop offset="0" stopColor="#f1f1f1" />
          <stop offset=".5" stopColor="#c9c9c9" />
          <stop offset="1" stopColor="#8f8f8f" />
        </linearGradient>
      </defs>
      <ellipse cx="18" cy="26" rx="11" ry="2" fill="#999" opacity=".5" />
      <g fill="url(#disk)" stroke="#8a8a8a" strokeWidth=".6">
        <path d="M2.500 17v4c0 5 18 5 18 0v-4z" />
        <path d="M2 11.500v4c0 5 18.500 5 18.500 0v-4z" />
        <path d="M2 6v4c0 5 18.500 5 18.500 0V6z" />
        <ellipse cx="11.300" cy="5.800" rx="9.300" ry="4.300" fill="#ededed" stroke="#bbb" />
      </g>
      <path d="M19.500 13h4.500v6h5.500v4H24v5.500h-4.500V23h-6v-4h6z" fill="#73e01c" stroke="#58b815" strokeWidth=".6" />
    </svg>
  );
}

const MACHINES = ["ubuntu", "windows", "debian", "debian", "windows"];
const LOGOS = { ubuntu: <UbuntuLogo />, windows: <WindowsLogo />, debian: <DebianLogo /> };

function SectionTitle({ children }) {
  return <h2 className="h-5 bg-[#1f3a6d] leading-5 text-white">{children}</h2>;
}

function Pager({ label }) {
  return (
    <div className="flex items-start gap-2.5 px-2.5 pb-1.5">
      <button aria-label={`Add to ${label}`} className="size-8 shrink-0 border border-[#808080] bg-[#e9e9e9]">
        <AddDatabaseIcon />
      </button>
      <nav aria-label={`${label} pages`} className="mr-px flex h-[30px] flex-1 gap-[5px] bg-[#e9e9e9] leading-5">
        {["<", "1", "2", "3", ">"].map((p) => (
          <a key={p} href="#">
            {p}
          </a>
        ))}
      </nav>
    </div>
  );
}

function LinkList({ items }) {
  return (
    <ul className="pt-px pl-[3px]">
      {items.map((item) => (
        <li key={item} className="h-[23px] leading-[23px]">
          <a href="#">{item}</a>
        </li>
      ))}
    </ul>
  );
}

function Sidebar() {
  return (
    <aside className="w-[200px] shrink-0 bg-[#bdbdbd]">
      <SectionTitle>Machines</SectionTitle>
      <ul className="flex flex-col gap-1 pt-2.5 pr-2 pb-[9px] pl-2.5">
        {MACHINES.map((os, i) => (
          <li key={i}>
            <button
              aria-label={`${os} machine`}
              className={
                i === 0
                  ? "flex h-[53px] w-full items-center bg-[#808080]"
                  : "flex h-[52px] w-full items-center border border-[#808080] bg-white"
              }
            >
              {LOGOS[os]}
            </button>
          </li>
        ))}
      </ul>
      <Pager label="Machines" />
      <SectionTitle>Sites</SectionTitle>
      <LinkList items={["Carmen", "Michelle"]} />
      <div className="pt-px">
        <Pager label="Sites" />
      </div>
      <SectionTitle>Applications</SectionTitle>
      <LinkList items={["PXE", "VPN"]} />
      <div className="h-10" />
    </aside>
  );
}

const METERS = [
  [
    { name: "ram", value: 93, color: "bg-[#b58806]" },
    { name: "core0", value: 84, color: "bg-[#5858fc]" },
    { name: "core1", value: 46, color: "bg-[#5858fc]" },
    { name: "core2", value: 51, color: "bg-[#5858fc]" },
    { name: "core3", value: 24, color: "bg-[#5858fc]" },
  ],
  [{ name: "sda5", value: 88, color: "bg-[#86b404]" }],
];

function Meter({ name, value, color }) {
  return (
    <div className="flex h-[22px]">
      <span className="w-[50px] leading-5">{name}</span>
      <div
        role="meter"
        aria-label={name}
        aria-valuemin={0}
        aria-valuemax={100}
        aria-valuenow={value}
        className="w-[202px] border border-black bg-white"
      >
        <div className={`h-full ${color}`} style={{ width: `${value}%` }} />
      </div>
      <span className="leading-5">{value}%</span>
    </div>
  );
}

function Page() {
  return (
    <main className="min-w-0 flex-1 overflow-hidden bg-white pt-2 font-['DejaVu_Serif',serif] text-base text-black">
      <div className="mx-auto w-full max-w-[850px]">
        <div className="h-5 bg-[#1f3a6d] leading-5 text-white">user</div>
        <ChipLogo />
        <div className="h-5 bg-[#1f3a6d] text-center leading-5 text-white">Chip interface</div>
        <div className="mt-2 flex items-start gap-2.5">
          <Sidebar />
          <section className="flex min-h-[390px] flex-1 bg-[#a4a4a4] pt-[19px] pl-2.5" aria-label="Usage">
            {METERS.map((column, i) => (
              <div key={i} className="flex w-[315px] flex-col gap-4">
                {column.map((m) => (
                  <Meter key={m.name} {...m} />
                ))}
              </div>
            ))}
          </section>
        </div>
      </div>
    </main>
  );
}

function Scrollbar() {
  return (
    <div className="flex w-[13px] shrink-0 flex-col border-x border-[#a8a5a0] bg-[#dcdad7]" aria-hidden="true">
      <div className="flex h-[13px] items-center justify-center rounded-t-md bg-[#f3f2f1]">
        <svg viewBox="0 0 6 4" className="h-1 w-1.5">
          <path d="M3 0l3 4H0z" fill="#aaa" />
        </svg>
      </div>
      <div className="flex h-[478px] flex-col items-center justify-center gap-0.5 rounded-md border-y border-[#a09d98] bg-linear-to-r from-[#fbfbfa] to-[#e2e0de]">
        <span className="h-px w-[3px] bg-[#b1aeaa]" />
        <span className="h-px w-[3px] bg-[#b1aeaa]" />
        <span className="h-px w-[3px] bg-[#b1aeaa]" />
      </div>
      <div className="mt-auto flex h-[14px] items-center justify-center rounded-b-md border-y border-[#b5b2ae] bg-[#f8f8f7]">
        <svg viewBox="0 0 6 4" className="h-1 w-1.5">
          <path d="M0 0h6L3 4z" fill="#777" />
        </svg>
      </div>
    </div>
  );
}

export default function App() {
  return (
    <div className="flex h-screen flex-col overflow-hidden font-['Noto_Sans',sans-serif]">
      <TitleBar />
      <div className="flex min-h-0 flex-1">
        <Launcher />
        <div className="flex min-w-0 flex-1 flex-col">
          <TabStrip />
          <NavBar />
          <BookmarksBar />
          <div className="flex min-h-0 flex-1">
            <Page />
            <Scrollbar />
          </div>
        </div>
      </div>
    </div>
  );
}
